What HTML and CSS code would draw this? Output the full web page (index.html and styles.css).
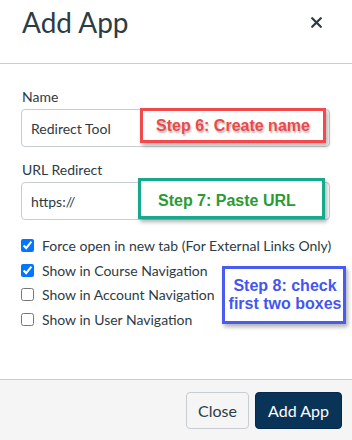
FILE: index.html
```html
<!DOCTYPE html>
<html>
<head>
<meta charset="utf-8">
<link rel="stylesheet" href="styles.css">
</head>
<body>
<div class="dialog">
  <header class="header">
    <h1 class="title">Add App</h1>
    <svg class="close-x" width="11" height="11" viewBox="0 0 11 11"><path d="M1.2 1.2 L9.8 9.8 M9.8 1.2 L1.2 9.8" stroke="#2d3b45" stroke-width="2.2" stroke-linecap="round"/></svg>
  </header>
  <main class="body">
    <div class="field">
      <label class="label">Name</label>
      <div class="input">Redirect Tool</div>
    </div>
    <div class="field">
      <label class="label">URL Redirect</label>
      <div class="input">https://</div>
    </div>
    <div class="checks">
      <label class="check"><input type="checkbox" checked><span>Force open in new tab (For External Links Only)</span></label>
      <label class="check"><input type="checkbox" checked><span>Show in Course Navigation</span></label>
      <label class="check"><input type="checkbox"><span>Show in Account Navigation</span></label>
      <label class="check"><input type="checkbox"><span>Show in User Navigation</span></label>
    </div>
  </main>
  <footer class="footer">
    <button class="btn btn-close">Close</button>
    <button class="btn btn-primary">Add App</button>
  </footer>
  <div class="note note-red">Step 6: Create name</div>
  <div class="note note-green">Step 7: Paste URL</div>
  <div class="note note-blue">Step 8: check<br>first two boxes</div>
</div>
</body>
</html>
```
FILE: styles.css
```css
html, body {
  margin: 0;
  padding: 0;
  background: #fff;
}
body {
  font-family: Lato, "Noto Sans", sans-serif;
  color: #2d3b45;
}
.dialog {
  position: relative;
  width: 352px;
  height: 440px;
  overflow: hidden;
  display: flex;
  flex-direction: column;
}
.header {
  height: 64px;
  box-sizing: border-box;
  border-bottom: 1px solid #c7cdd1;
  display: flex;
  justify-content: space-between;
  align-items: flex-start;
  padding: 0 30px 0 22px;
}
.title {
  margin: 0;
  padding-top: 5px;
  font-size: 28px;
  font-weight: 400;
  line-height: 34px;
  color: #2d3b45;
}
.close-x {
  margin-top: 17px;
}
.body {
  flex: 1;
  padding: 23px 22px 0 21px;
}
.field {
  display: flex;
  flex-direction: column;
  margin-bottom: 13px;
}
.label {
  font-size: 14px;
  line-height: 20px;
  margin: 0 0 2px 1px;
  color: #2d3b45;
}
.input {
  height: 38px;
  box-sizing: border-box;
  border: 1px solid #c7cdd1;
  border-radius: 4px;
  padding: 0 9px;
  display: flex;
  align-items: center;
  font-size: 14px;
  color: #2d3b45;
  width: 309px;
}
.checks {
  display: flex;
  flex-direction: column;
  padding-top: 0px;
}
.check {
  display: flex;
  align-items: center;
  height: 24.7px;
  font-size: 14px;
  gap: 8px;
  white-space: nowrap;
}
.check input {
  margin: 0;
  width: 13px;
  height: 13px;
  flex: none;
}
.footer {
  height: 61px;
  box-sizing: border-box;
  border-top: 1px solid #c7cdd1;
  background: #f5f5f5;
  display: flex;
  justify-content: flex-end;
  align-items: flex-start;
  padding: 12px 10px 0 0;
  gap: 6px;
}
.btn {
  height: 37px;
  font-family: Lato, "Noto Sans", sans-serif;
  font-size: 16px;
  border-radius: 4px;
  padding: 0 11px;
  line-height: 35px;
}
.btn-close {
  background: #f5f5f5;
  border: 1px solid #c7cdd1;
  color: #2d3b45;
  width: 63px;
}
.btn-primary {
  background: #0a3358;
  border: 1px solid #06284a;
  color: #fff;
  width: 87px;
}
.note {
  position: absolute;
  box-sizing: border-box;
  background: #fff;
  font-family: "Liberation Sans", Arial, sans-serif;
  font-weight: 700;
  display: flex;
  align-items: center;
  white-space: nowrap;
  box-shadow: 2px 3px 4px rgba(0, 0, 0, 0.3);
}
.note-red {
  left: 140px;
  top: 108px;
  width: 186px;
  height: 35px;
  border: 3px solid #f24a4c;
  color: #f04848;
  font-size: 16px;
  justify-content: center;
  padding: 1px 0 0 0;
  text-shadow: 1px 2px 2px rgba(0, 0, 0, 0.3);
}
.note-green {
  left: 138px;
  top: 178px;
  width: 187px;
  height: 41px;
  border: 3px solid #17a98b;
  color: #2a9b33;
  font-size: 16px;
  padding: 4px 0 0 17px;
}
.note-blue {
  left: 222px;
  top: 266px;
  width: 124px;
  height: 58px;
  border: 3px solid #4a5cf0;
  color: #4357ef;
  font-size: 16px;
  line-height: 18px;
  justify-content: center;
  text-align: center;
  padding-left: 2px;
}
```
